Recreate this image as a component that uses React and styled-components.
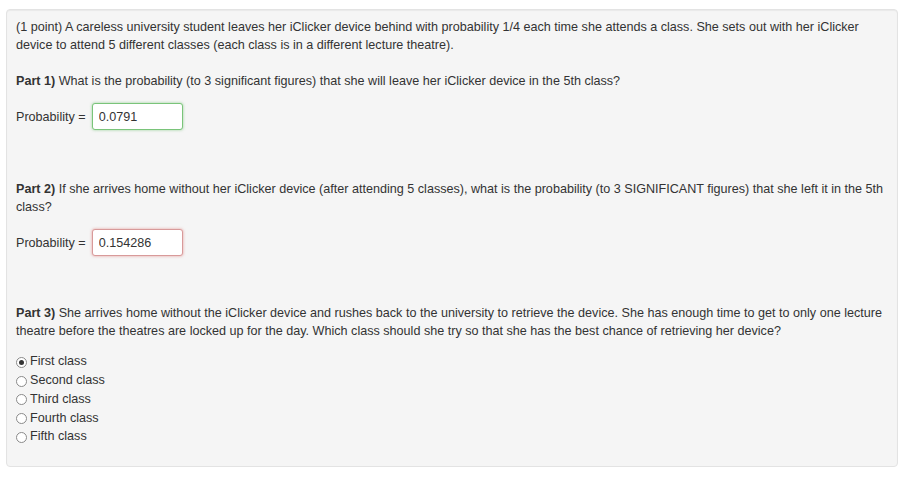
import React, { useState } from "react";
import styled, { createGlobalStyle } from "styled-components";

const GlobalStyle = createGlobalStyle`
  html, body {
    margin: 0;
    padding: 0;
    background: #ffffff;
  }
  body {
    font-family: "Liberation Sans", Arial, sans-serif;
    font-size: 12.6px;
    color: #333333;
  }
`;

const options = ["First class", "Second class", "Third class", "Fourth class", "Fifth class"];

export default function App() {
  const [choice, setChoice] = useState(0);

  return (
    <Page>
      <GlobalStyle />
      <Well>
        <Para>
          (1 point) A careless university student leaves her iClicker device behind with
          probability 1/4 each time she attends a class. She sets out with her iClicker device
          to attend 5 different classes (each class is in a different lecture theatre).
        </Para>

        <Para $top={18}>
          <b>Part 1)</b> What is the probability (to 3 significant figures) that she will leave
          her iClicker device in the 5th class?
        </Para>
        <AnswerRow>
          Probability =
          <AnswerBox $state="correct" defaultValue="0.0791" />
        </AnswerRow>

        <Para $top={50}>
          <b>Part 2)</b> If she arrives home without her iClicker device (after attending 5
          classes), what is the probability (to 3 SIGNIFICANT figures) that she left it in the
          5th class?
        </Para>
        <AnswerRow>
          Probability =
          <AnswerBox $state="wrong" defaultValue="0.154286" />
        </AnswerRow>

        <Para $top={48}>
          <b>Part 3)</b> She arrives home without the iClicker device and rushes back to the
          university to retrieve the device. She has enough time to get to only one lecture
          theatre before the theatres are locked up for the day. Which class should she try so
          that she has the best chance of retrieving her device?
        </Para>

        <RadioList>
          {options.map((label, i) => (
            <RadioLabel key={label}>
              <Radio
                type="radio"
                name="part3"
                checked={choice === i}
                onChange={() => setChoice(i)}
              />
              {label}
            </RadioLabel>
          ))}
        </RadioList>
      </Well>
    </Page>
  );
}

const Page = styled.div`
  padding: 9px 14px 12px 6px;
`;

const Well = styled.div`
  background: #f5f5f5;
  border: 1px solid #e3e3e3;
  border-radius: 4px;
  box-shadow: inset 0 1px 1px rgba(0, 0, 0, 0.05);
  padding: 8px 9px 20px 9px;
`;

const Para = styled.p`
  margin: ${(p) => p.$top || 0}px 0 0 0;
  line-height: 18px;

  b {
    font-weight: bold;
  }
`;

const AnswerRow = styled.div`
  display: flex;
  align-items: center;
  gap: 6px;
  margin-top: 13px;
  line-height: 18px;
`;

const AnswerBox = styled.input`
  width: 91px;
  height: 27px;
  box-sizing: border-box;
  padding: 0 6px;
  font-family: inherit;
  font-size: 12.6px;
  color: #333333;
  background: #ffffff;
  border-radius: 3px;
  outline: none;
  border: 1px solid ${(p) => (p.$state === "correct" ? "#7ac47a" : "#d89a9a")};
  box-shadow: ${(p) =>
    p.$state === "correct"
      ? "0 0 3px rgba(92, 184, 92, 0.6)"
      : "0 0 3px rgba(217, 83, 79, 0.55)"};
`;

const RadioList = styled.div`
  display: flex;
  flex-direction: column;
  margin-top: 12px;
`;

const RadioLabel = styled.label`
  display: flex;
  align-items: center;
  gap: 3px;
  height: 18.75px;
  font-size: 12.6px;
  color: #333333;
`;

const Radio = styled.input`
  appearance: none;
  margin: 0;
  width: 11px;
  height: 11px;
  border: 1px solid #8a8a8a;
  border-radius: 50%;
  background: #ffffff;
  position: relative;
  top: 1px;

  &:checked::after {
    content: "";
    position: absolute;
    left: 2px;
    top: 2px;
    width: 5px;
    height: 5px;
    border-radius: 50%;
    background: #333333;
  }
`;
